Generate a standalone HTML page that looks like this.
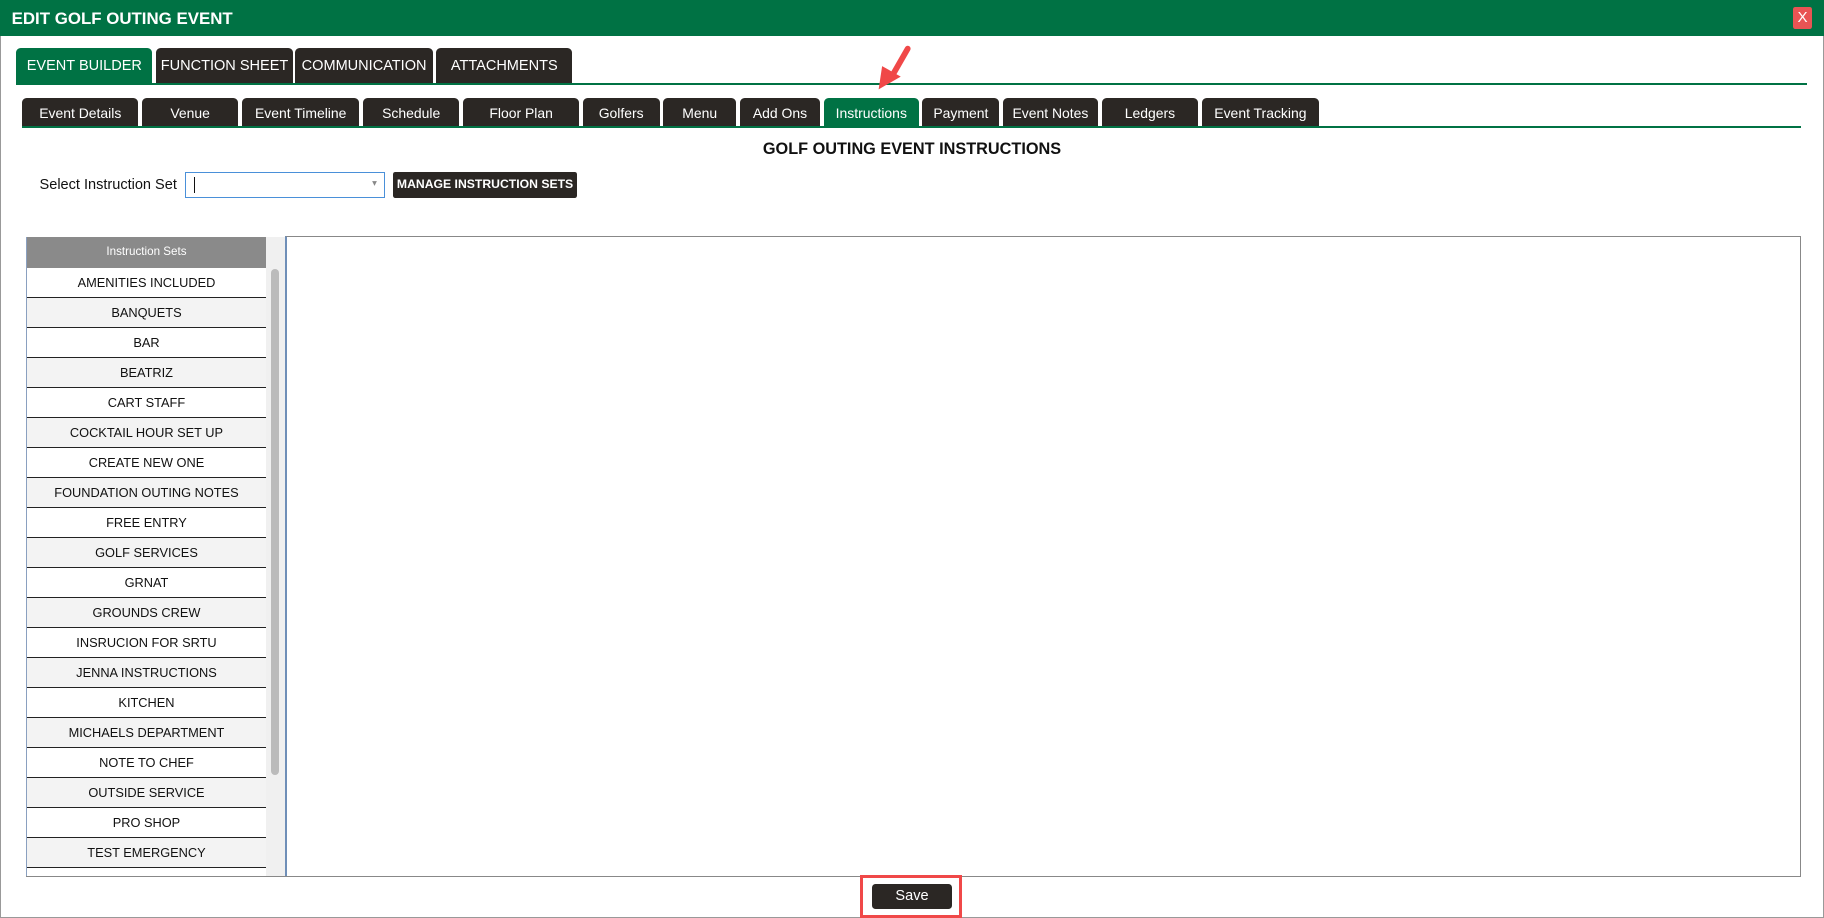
<!DOCTYPE html>
<html><head><meta charset="utf-8"><style>
html,body{margin:0;padding:0;background:#fff;overflow:hidden}
#w{zoom:1.16327;position:relative;width:1568px;height:789px;font-family:"Liberation Sans",sans-serif;}
.a{position:absolute;box-sizing:border-box}
.tab{position:absolute;box-sizing:border-box;background:#2b2724;color:#fff;border-radius:4px 4px 0 0;text-align:center;white-space:nowrap}
.mt{top:41px;height:31px;font-size:12.5px;line-height:32px}
.st{top:84px;height:25px;font-size:12px;line-height:27px}
.g{background:#007244}
.row{height:25.8px;line-height:25px;font-size:11px;text-align:center;border-bottom:1.5px solid #222;box-sizing:border-box;color:#111}
.row:nth-child(even){background:#f3f3f3}
</style></head><body><div id="w">
<div class="a" style="left:0;top:0;width:1568px;height:789px;border:1px solid #999"></div>
<div class="a" style="left:0;top:0;width:1568px;height:31px;background:#007244;color:#fff;font-weight:bold;font-size:14.5px;line-height:33px;padding-left:10px">EDIT GOLF OUTING EVENT</div>
<div class="a" style="left:1541px;top:6px;width:17px;height:19px;background:#e85454;border-radius:2px;color:#fff;font-size:13px;text-align:center;line-height:19px">X</div>

<div class="tab mt g" style="left:14px;width:117px">EVENT BUILDER</div>
<div class="tab mt" style="left:134px;width:118px">FUNCTION SHEET</div>
<div class="tab mt" style="left:254px;width:118px">COMMUNICATION</div>
<div class="tab mt" style="left:375px;width:117px">ATTACHMENTS</div>
<div class="a" style="left:14px;top:71px;width:1539px;height:2px;background:#007244"></div>

<div class="tab st" style="left:19px;width:100px">Event Details</div>
<div class="tab st" style="left:122px;width:83px">Venue</div>
<div class="tab st" style="left:208px;width:101px">Event Timeline</div>
<div class="tab st" style="left:312px;width:83px">Schedule</div>
<div class="tab st" style="left:398px;width:100px">Floor Plan</div>
<div class="tab st" style="left:501px;width:66px">Golfers</div>
<div class="tab st" style="left:570px;width:63px">Menu</div>
<div class="tab st" style="left:636px;width:69px">Add Ons</div>
<div class="tab st g" style="left:708px;width:82px">Instructions</div>
<div class="tab st" style="left:793px;width:66px">Payment</div>
<div class="tab st" style="left:862px;width:82px">Event Notes</div>
<div class="tab st" style="left:947px;width:83px">Ledgers</div>
<div class="tab st" style="left:1033px;width:101px">Event Tracking</div>
<div class="a" style="left:19px;top:108px;width:1529px;height:2px;background:#007244"></div>

<svg class="a" style="left:745px;top:38px" width="45" height="42"><path d="M35 4 L23 25" stroke="#f04848" stroke-width="5" stroke-linecap="round"/><path d="M10 39 L13 19 L29 28 Z" fill="#f04848"/></svg>

<div class="a" style="left:0;top:119px;width:1568px;text-align:center;font-weight:bold;font-size:14px;line-height:20px;color:#111">GOLF OUTING EVENT INSTRUCTIONS</div>
<div class="a" style="left:34px;top:151px;font-size:12.5px;line-height:17px;color:#111">Select Instruction Set</div>
<div class="a" style="left:159px;top:148px;width:172px;height:22px;border:1px solid #4a90d9;background:#fff"><div class="a" style="left:7px;top:3px;width:1px;height:14px;background:#111"></div><div class="a" style="left:160px;top:4px;font-size:8px;color:#888">▾</div></div>
<div class="a" style="left:338px;top:148px;width:158px;height:22px;background:#2b2724;border-radius:2px;color:#fff;font-weight:bold;font-size:10.5px;line-height:22px;text-align:center">MANAGE INSTRUCTION SETS</div>

<div class="a" style="left:22px;top:204px;width:207px;height:550px;border-left:1px solid #8aa0c0;overflow:hidden">
<div style="height:26px;background:#8a8a8a;color:#fff;font-size:10px;line-height:26px;text-align:center">Instruction Sets</div>
<div>
<div class="row">AMENITIES INCLUDED</div><div class="row">BANQUETS</div><div class="row">BAR</div><div class="row">BEATRIZ</div><div class="row">CART STAFF</div><div class="row">COCKTAIL HOUR SET UP</div><div class="row">CREATE NEW ONE</div><div class="row">FOUNDATION OUTING NOTES</div><div class="row">FREE ENTRY</div><div class="row">GOLF SERVICES</div><div class="row">GRNAT</div><div class="row">GROUNDS CREW</div><div class="row">INSRUCION FOR SRTU</div><div class="row">JENNA INSTRUCTIONS</div><div class="row">KITCHEN</div><div class="row">MICHAELS DEPARTMENT</div><div class="row">NOTE TO CHEF</div><div class="row">OUTSIDE SERVICE</div><div class="row">PRO SHOP</div><div class="row">TEST EMERGENCY</div><div class="row"></div>
</div></div>
<div class="a" style="left:229px;top:204px;width:16px;height:550px;background:#f0f0f0"><div class="a" style="left:4px;top:27px;width:7px;height:435px;background:#bbb;border-radius:4px"></div></div>
<div class="a" style="left:245px;top:203px;width:1303px;height:551px;border:1px solid #888;border-left:2px solid #6f8fb8"></div>
<div class="a" style="left:22px;top:753px;width:1526px;height:1px;background:#888"></div>

<div class="a" style="left:739px;top:752px;width:88px;height:37px;border:3px solid #f04848"></div>
<div class="a" style="left:750px;top:760px;width:68px;height:21px;background:#2b2724;border-radius:3px;color:#fff;font-size:12.5px;line-height:21px;text-align:center">Save</div>
</div></body></html>
